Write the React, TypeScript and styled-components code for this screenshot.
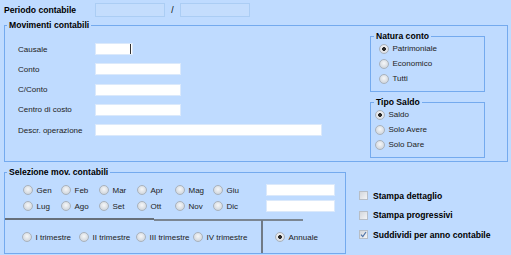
import React from "react";
import styled, { createGlobalStyle } from "styled-components";

const Global = createGlobalStyle`
  html, body { margin: 0; padding: 0; background: #bfdbff; }
  body { font-family: "Liberation Sans", Arial, sans-serif; font-size: 8px; color: #222; }
  * { box-sizing: border-box; }
`;

const Page = styled.div`
  width: 511px;
  height: 255px;
  overflow: hidden;
  padding: 3px 3px 0 4px;
  display: flex;
  flex-direction: column;
  background: #bfdbff;
`;

const PeriodRow = styled.div`
  display: flex;
  align-items: center;
  height: 14px;
`;

const Bold = styled.span<{ $w?: number }>`
  font-weight: 700;
  font-size: 8.6px;
  color: #000;
  white-space: nowrap;
  width: ${(p) => (p.$w ? `${p.$w}px` : "auto")};
`;

const PeriodInput = styled.div`
  width: 70px;
  height: 14px;
  background: #c4ddfd;
  border: 1px solid #abcdf4;
`;

const Slash = styled.span`
  width: 15px;
  text-align: center;
  color: #000;
  font-size: 8.6px;
`;

const Group = styled.fieldset<{ $w: number; $h: number }>`
  margin: 0;
  padding: 0;
  min-width: 0;
  width: ${(p) => p.$w}px;
  height: ${(p) => p.$h}px;
  border: 1px solid #74aaee;
  flex: none;
`;

const Legend = styled.legend<{ $ml: number }>`
  padding: 0 2px;
  margin-left: ${(p) => p.$ml}px;
  font-weight: 700;
  font-size: 8.6px;
  color: #000;
  height: 10px;
  line-height: 10px;
`;

const MovGroup = styled(Group)`
  margin-top: 3px;
`;

const MovBody = styled.div`
  display: flex;
  justify-content: space-between;
  padding: 1px 22px 0 13px;
`;

const FormGrid = styled.div`
  margin-top: 12px;
  display: grid;
  grid-template-columns: 77px auto;
  grid-auto-rows: 12px;
  row-gap: 8.3px;
  align-items: center;
`;

const Label = styled.span`
  white-space: nowrap;
`;

const Field = styled.div<{ $w: number; $caret?: boolean }>`
  width: ${(p) => p.$w}px;
  height: 12px;
  background: #fff;
  border: 1px solid #dbe9fb;
  box-shadow: ${(p) => (p.$caret ? "inset -1px 0 0 #fff, inset -2px 0 0 #333" : "none")};
`;

const SideCol = styled.div`
  display: flex;
  flex-direction: column;
  gap: 5px;
`;

const RadioList = styled.div<{ $pl: number }>`
  display: flex;
  flex-direction: column;
  padding-left: ${(p) => p.$pl}px;
`;

const Option = styled.label<{ $h?: number }>`
  display: flex;
  align-items: center;
  gap: 3.5px;
  height: ${(p) => p.$h ?? 15}px;
  white-space: nowrap;
`;

const RadioDot = styled.span<{ $on?: boolean }>`
  flex: none;
  width: 10px;
  height: 10px;
  border-radius: 50%;
  border: 1px solid #a9b2bc;
  background: ${(p) =>
    p.$on
      ? "radial-gradient(circle, #2a2a2a 0 1.6px, transparent 2.2px), radial-gradient(circle at 50% 40%, #fbfbfc 0, #d9dde3 75%)"
      : "radial-gradient(circle at 50% 40%, #f6f7f8 0, #cfd5dc 80%)"};
`;

const BottomArea = styled.div`
  display: flex;
  margin-top: 5px;
`;

const MonthArea = styled.div`
  display: flex;
  padding: 5px 0 0 18px;
`;

const MonthGrid = styled.div`
  display: grid;
  grid-template-columns: repeat(6, 38px);
  grid-auto-rows: 16px;
`;

const SideInputs = styled.div`
  display: flex;
  flex-direction: column;
  gap: 4px;
  padding-top: 2px;
  margin-left: 15px;
`;

const Separator = styled.div`
  display: flex;
  height: 3px;
  margin-top: 4px;
`;

const SepSegment = styled.div<{ $low?: boolean }>`
  width: 149px;
  height: 2px;
  align-self: ${(p) => (p.$low ? "flex-end" : "flex-start")};
  background: ${(p) => (p.$low ? "#7b8692" : "#666f7a")};
`;

const QuarterRow = styled.div`
  display: flex;
  height: 32px;
`;

const QuarterGrid = styled.div`
  width: 256px;
  display: grid;
  grid-template-columns: repeat(4, 57px);
  align-items: center;
  padding-left: 17px;
`;

const VLine = styled.div`
  width: 2px;
  margin-top: -1px;
  background: #707a86;
`;

const AnnualCell = styled.div`
  display: flex;
  align-items: center;
  padding-left: 12px;
`;

const CheckCol = styled.div`
  display: flex;
  flex-direction: column;
  margin-left: 13px;
  padding-top: 19px;
`;

const CheckRow = styled.label`
  display: flex;
  align-items: center;
  gap: 5px;
  height: 19.6px;
  font-weight: 700;
  font-size: 8.6px;
  color: #000;
  white-space: nowrap;
`;

const Box = styled.span`
  flex: none;
  width: 9px;
  height: 9px;
  border: 1px solid #b7bec7;
  background: linear-gradient(135deg, #d3d7dc, #f3f4f6);
  display: flex;
  align-items: center;
  justify-content: center;
`;

const Radio = ({ label, on }: { label: string; on?: boolean }) => (
  <Option>
    <RadioDot $on={on} />
    {label}
  </Option>
);

const Check = ({ label, on }: { label: string; on?: boolean }) => (
  <CheckRow>
    <Box>
      {on && (
        <svg width="7" height="7" viewBox="0 0 7 7">
          <path d="M1 3.6 L2.8 5.6 L6 1" fill="none" stroke="#4f73a8" strokeWidth="1.2" />
        </svg>
      )}
    </Box>
    {label}
  </CheckRow>
);

const months = ["Gen", "Feb", "Mar", "Apr", "Mag", "Giu", "Lug", "Ago", "Set", "Ott", "Nov", "Dic"];
const quarters = ["I trimestre", "II trimestre", "III trimestre", "IV trimestre"];

export default function App() {
  return (
    <Page>
      <Global />
      <PeriodRow>
        <Bold $w={91}>Periodo contabile</Bold>
        <PeriodInput />
        <Slash>/</Slash>
        <PeriodInput />
      </PeriodRow>

      <MovGroup $w={504} $h={142}>
        <Legend $ml={2}>Movimenti contabili</Legend>
        <MovBody>
          <FormGrid>
            <Label>Causale</Label>
            <Field $w={38} $caret />
            <Label>Conto</Label>
            <Field $w={86} />
            <Label>C/Conto</Label>
            <Field $w={86} />
            <Label>Centro di costo</Label>
            <Field $w={86} />
            <Label>Descr. operazione</Label>
            <Field $w={227} />
          </FormGrid>
          <SideCol>
            <Group $w={115} $h={61}>
              <Legend $ml={3}>Natura conto</Legend>
              <RadioList $pl={8}>
                <Radio label="Patrimoniale" on />
                <Radio label="Economico" />
                <Radio label="Tutti" />
              </RadioList>
            </Group>
            <Group $w={115} $h={61}>
              <Legend $ml={3}>Tipo Saldo</Legend>
              <RadioList $pl={4}>
                <Radio label="Saldo" on />
                <Radio label="Solo Avere" />
                <Radio label="Solo Dare" />
              </RadioList>
            </Group>
          </SideCol>
        </MovBody>
      </MovGroup>

      <BottomArea>
        <Group $w={342} $h={87}>
          <Legend $ml={2}>Selezione mov. contabili</Legend>
          <MonthArea>
            <MonthGrid>
              {months.map((m) => (
                <Option key={m} $h={16}>
                  <RadioDot />
                  {m}
                </Option>
              ))}
            </MonthGrid>
            <SideInputs>
              <Field $w={69} />
              <Field $w={69} />
            </SideInputs>
          </MonthArea>
          <Separator>
            <SepSegment />
            <SepSegment $low />
          </Separator>
          <QuarterRow>
            <QuarterGrid>
              {quarters.map((q) => (
                <Radio key={q} label={q} />
              ))}
            </QuarterGrid>
            <VLine />
            <AnnualCell>
              <Radio label="Annuale" on />
            </AnnualCell>
          </QuarterRow>
        </Group>
        <CheckCol>
          <Check label="Stampa dettaglio" />
          <Check label="Stampa progressivi" />
          <Check label="Suddividi per anno contabile" on />
        </CheckCol>
      </BottomArea>
    </Page>
  );
}
